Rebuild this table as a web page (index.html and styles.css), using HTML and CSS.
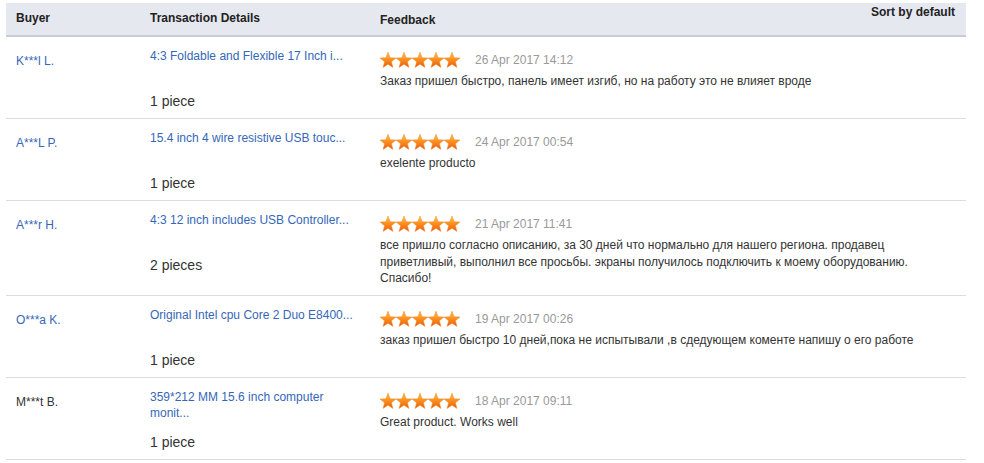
FILE: index.html
```html
<!DOCTYPE html>
<html>
<head>
<meta charset="utf-8">
<link rel="stylesheet" href="styles.css">
</head>
<body>
<svg class="defs" width="0" height="0" aria-hidden="true">
  <defs>
    <linearGradient id="sg" x1="0" y1="0" x2="0" y2="1">
      <stop offset="0" stop-color="#ffc23c"/>
      <stop offset="0.45" stop-color="#fb9323"/>
      <stop offset="1" stop-color="#ec5a0b"/>
    </linearGradient>
    <symbol id="star" viewBox="0 0 16 16">
      <polygon points="8,0.2 10.12,5.69 15.99,6 11.42,9.71 12.94,15.4 8,12.2 3.06,15.4 4.58,9.71 0.01,6 5.88,5.69" fill="url(#sg)" stroke="#f08a2a" stroke-width="0.5" stroke-linejoin="round"/>
    </symbol>
  </defs>
</svg>
<div class="reviews">
  <div class="head">
    <div class="h-buyer">Buyer</div>
    <div class="h-trans">Transaction Details</div>
    <div class="h-feed"><span class="h-feed-label">Feedback</span><span class="sort">Sort by default</span></div>
  </div>

  <div class="row">
    <div class="buyer"><a class="name">K***l L.</a></div>
    <div class="trans"><a class="prod">4:3 Foldable and Flexible 17 Inch i...</a><div class="qty">1 piece</div></div>
    <div class="feed">
      <div class="rate"><svg class="stars" viewBox="0 0 80 16" width="80" height="16"><use href="#star" x="0" width="16" height="16"/><use href="#star" x="16" width="16" height="16"/><use href="#star" x="32" width="16" height="16"/><use href="#star" x="48" width="16" height="16"/><use href="#star" x="64" width="16" height="16"/></svg><span class="date">26 Apr 2017 14:12</span></div>
      <div class="comment">Заказ пришел быстро, панель имеет изгиб, но на работу это не влияет вроде</div>
    </div>
  </div>

  <div class="row">
    <div class="buyer"><a class="name">A***L P.</a></div>
    <div class="trans"><a class="prod">15.4 inch 4 wire resistive USB touc...</a><div class="qty">1 piece</div></div>
    <div class="feed">
      <div class="rate"><svg class="stars" viewBox="0 0 80 16" width="80" height="16"><use href="#star" x="0" width="16" height="16"/><use href="#star" x="16" width="16" height="16"/><use href="#star" x="32" width="16" height="16"/><use href="#star" x="48" width="16" height="16"/><use href="#star" x="64" width="16" height="16"/></svg><span class="date">24 Apr 2017 00:54</span></div>
      <div class="comment">exelente producto</div>
    </div>
  </div>

  <div class="row">
    <div class="buyer"><a class="name">A***r H.</a></div>
    <div class="trans"><a class="prod">4:3 12 inch includes USB Controller...</a><div class="qty">2 pieces</div></div>
    <div class="feed">
      <div class="rate"><svg class="stars" viewBox="0 0 80 16" width="80" height="16"><use href="#star" x="0" width="16" height="16"/><use href="#star" x="16" width="16" height="16"/><use href="#star" x="32" width="16" height="16"/><use href="#star" x="48" width="16" height="16"/><use href="#star" x="64" width="16" height="16"/></svg><span class="date">21 Apr 2017 11:41</span></div>
      <div class="comment">все пришло согласно описанию, за 30 дней что нормально для нашего региона. продавец<br>приветливый, выполнил все просьбы. экраны получилось подключить к моему оборудованию. Спасибо!</div>
    </div>
  </div>

  <div class="row">
    <div class="buyer"><a class="name">O***a K.</a></div>
    <div class="trans"><a class="prod">Original Intel cpu Core 2 Duo E8400...</a><div class="qty">1 piece</div></div>
    <div class="feed">
      <div class="rate"><svg class="stars" viewBox="0 0 80 16" width="80" height="16"><use href="#star" x="0" width="16" height="16"/><use href="#star" x="16" width="16" height="16"/><use href="#star" x="32" width="16" height="16"/><use href="#star" x="48" width="16" height="16"/><use href="#star" x="64" width="16" height="16"/></svg><span class="date">19 Apr 2017 00:26</span></div>
      <div class="comment">заказ пришел быстро 10 дней,пока не испытывали ,в сдедующем коменте напишу о его работе</div>
    </div>
  </div>

  <div class="row">
    <div class="buyer"><span class="name plain">M***t B.</span></div>
    <div class="trans"><a class="prod">359*212 MM 15.6 inch computer monit...</a><div class="qty">1 piece</div></div>
    <div class="feed">
      <div class="rate"><svg class="stars" viewBox="0 0 80 16" width="80" height="16"><use href="#star" x="0" width="16" height="16"/><use href="#star" x="16" width="16" height="16"/><use href="#star" x="32" width="16" height="16"/><use href="#star" x="48" width="16" height="16"/><use href="#star" x="64" width="16" height="16"/></svg><span class="date">18 Apr 2017 09:11</span></div>
      <div class="comment">Great product. Works well</div>
    </div>
  </div>
</div>
</body>
</html>
```

FILE: styles.css
```css
html, body {
  margin: 0;
  padding: 0;
  background: #ffffff;
}
body {
  font-family: "Liberation Sans", Arial, sans-serif;
  font-size: 12px;
  color: #333333;
}
.defs {
  position: absolute;
  width: 0;
  height: 0;
  overflow: hidden;
}
.reviews {
  width: 960px;
  margin: 3px 0 0 6px;
}
.head {
  display: grid;
  grid-template-columns: 144px 230px 1fr;
  height: 32px;
  background: #e6e8ef;
  border-bottom: 2px solid #c9cbd3;
  font-weight: bold;
  color: #222222;
  line-height: 16px;
}
.h-buyer {
  padding: 7px 0 0 10px;
}
.h-trans {
  padding-top: 7px;
}
.h-feed {
  display: flex;
  justify-content: space-between;
  padding-right: 11px;
}
.h-feed-label {
  padding-top: 9px;
}
.sort {
  padding-top: 1px;
}
.row {
  display: grid;
  grid-template-columns: 144px 230px 1fr;
  border-bottom: 1px solid #dddddd;
  padding: 11px 0 8px;
  line-height: 16px;
}
.buyer {
  padding: 5px 0 0 10px;
}
.name {
  color: #3567b9;
  text-decoration: none;
}
.name.plain {
  color: #333333;
}
.trans {
  display: flex;
  flex-direction: column;
}
.prod {
  display: block;
  width: 212px;
  height: 32px;
  color: #3567b9;
  text-decoration: none;
}
.qty {
  margin-top: 12px;
  font-size: 14px;
  line-height: 18px;
  color: #333333;
}
.feed {
  padding-top: 4px;
}
.rate {
  display: flex;
  align-items: center;
  height: 16px;
}
.stars {
  display: block;
  flex: none;
}
.date {
  margin-left: 15px;
  color: #999999;
}
.comment {
  margin-top: 5px;
  width: 560px;
  line-height: 16.5px;
  color: #333333;
}
```
